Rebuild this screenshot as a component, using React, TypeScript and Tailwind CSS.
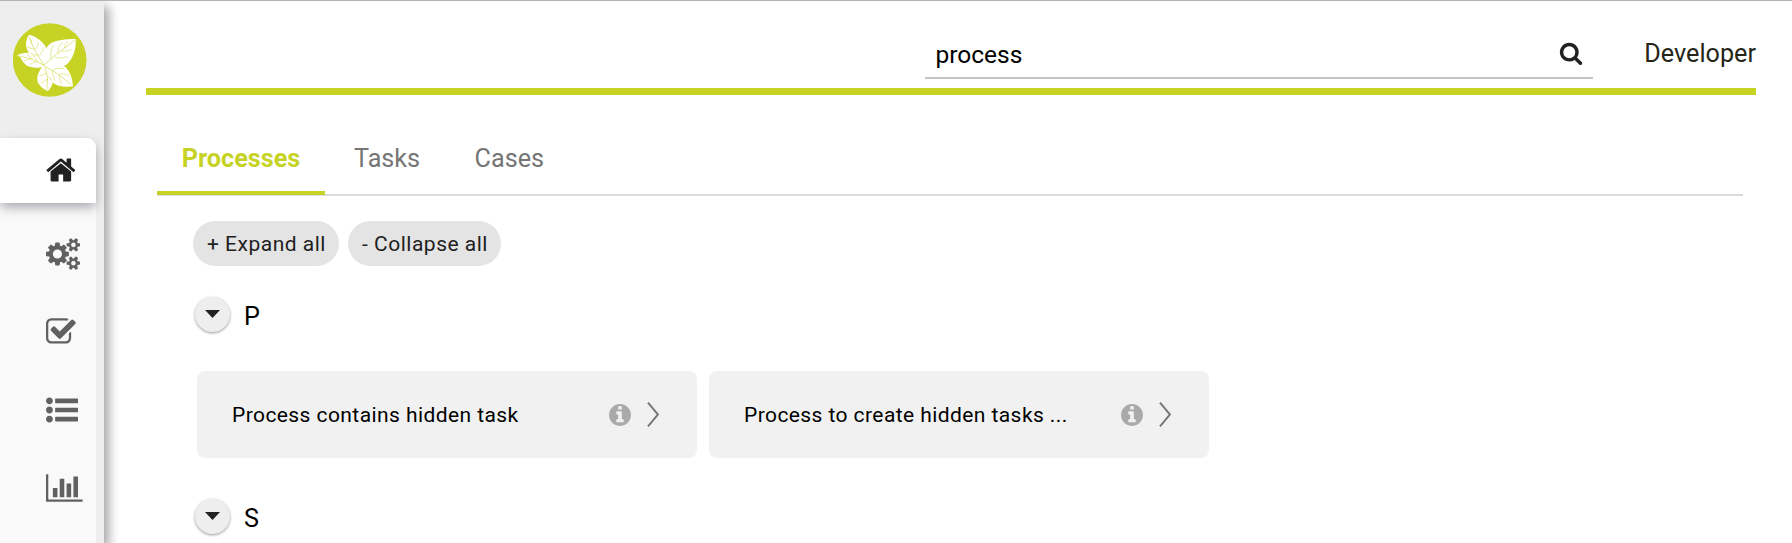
import React from "react";

const HOME =
  "M1472 992v480q0 26-19 45t-45 19h-384v-384h-256v384h-384q-26 0-45-19t-19-45v-480q0-1 .5-3t.5-3l575-474 575 474q1 2 1 6zm223-69l-62 74q-8 9-21 11h-3q-13 0-21-7l-692-577-692 577q-12 8-24 7-13-2-21-11l-62-74q-8-10-7-23.5t11-21.5l719-599q32-26 76-26t76 26l244 204v-195q0-14 9-23t23-9h192q14 0 23 9t9 23v408l219 182q10 8 11 21.5t-7 23.5z";
const COGS =
  "M832 896q0-106-75-181t-181-75-181 75-75 181 75 181 181 75 181-75 75-181zm768 512q0-52-38-90t-90-38-90 38-38 90q0 53 37.5 90.5t90.5 37.5 90.5-37.5 37.5-90.5zm0-1024q0-52-38-90t-90-38-90 38-38 90q0 53 37.5 90.5t90.5 37.5 90.5-37.5 37.5-90.5zm-384 421v185q0 10-7 19.5t-16 10.5l-155 24q-11 35-32 76 34 48 90 115 7 11 7 20 0 12-7 19-23 30-82.5 89.5t-78.5 59.5q-11 0-21-7l-115-90q-37 19-77 31-11 108-23 155-7 24-30 24h-186q-11 0-20-7.5t-10-17.5l-23-153q-34-10-75-31l-118 89q-7 7-20 7-11 0-21-8-144-133-144-160 0-9 7-19 10-14 41-53t47-61q-23-44-35-82l-152-24q-10-1-17-9.5t-7-19.5v-185q0-10 7-19.5t16-10.5l155-24q11-35 32-76-34-48-90-115-7-11-7-20 0-12 7-20 22-30 82-89t79-59q11 0 21 7l115 90q34-18 77-32 11-108 23-154 7-24 30-24h186q11 0 20 7.5t10 17.5l23 153q34 10 75 31l118-89q8-7 20-7 11 0 21 8 144 133 144 160 0 8-7 19-12 16-42 54t-45 60q23 48 34 82l152 23q10 2 17 10.5t7 19.5zm640 533v140q0 16-149 31-12 27-30 52 51 113 51 138 0 4-4 7-122 71-124 71-8 0-46-47t-52-68q-20 2-30 2t-30-2q-14 21-52 68t-46 47q-2 0-124-71-4-3-4-7 0-25 51-138-18-25-30-52-149-15-149-31v-140q0-16 149-31 13-29 30-52-51-113-51-138 0-4 4-7 4-2 35-20t59-34 30-16q8 0 46 46.5t52 67.5q20-2 30-2t30 2q51-71 92-112l6-2q4 0 124 70 4 3 4 7 0 25-51 138 17 23 30 52 149 15 149 31zm0-1024v140q0 16-149 31-12 27-30 52 51 113 51 138 0 4-4 7-122 71-124 71-8 0-46-47t-52-68q-20 2-30 2t-30-2q-14 21-52 68t-46 47q-2 0-124-71-4-3-4-7 0-25 51-138-18-25-30-52-149-15-149-31v-140q0-16 149-31 13-29 30-52-51-113-51-138 0-4 4-7 4-2 35-20t59-34 30-16q8 0 46 46.5t52 67.5q20-2 30-2t30 2q51-71 92-112l6-2q4 0 124 70 4 3 4 7 0 25-51 138 17 23 30 52 149 15 149 31z";
const CHECK =
  "M1472 930v318q0 119-84.5 203.5t-203.5 84.5h-832q-119 0-203.5-84.5t-84.5-203.5v-832q0-119 84.5-203.5t203.5-84.5h832q63 0 117 25 15 7 18 23 3 17-9 29l-49 49q-10 10-23 10-3 0-9-2-23-6-45-6h-832q-66 0-113 47t-47 113v832q0 66 47 113t113 47h832q66 0 113-47t47-113v-254q0-13 9-22l64-64q10-10 23-10 6 0 12 3 20 8 20 29zm231-489l-814 814q-24 24-57 24t-57-24l-430-430q-24-24-24-57t24-57l110-110q24-24 57-24t57 24l263 263 647-647q24-24 57-24t57 24l110 110q24 24 24 57t-24 57z";
const LIST =
  "M384 1408q0 80-56 136t-136 56-136-56-56-136 56-136 136-56 136 56 56 136zm0-512q0 80-56 136t-136 56-136-56-56-136 56-136 136-56 136 56 56 136zm1408 416v192q0 13-9.500 22.500t-22.500 9.500h-1216q-13 0-22.500-9.500t-9.500-22.500v-192q0-13 9.500-22.500t22.500-9.500h1216q13 0 22.500 9.500t9.500 22.500zm-1408-928q0 80-56 136t-136 56-136-56-56-136 56-136 136-56 136 56 56 136zm1408 416v192q0 13-9.500 22.500t-22.500 9.500h-1216q-13 0-22.500-9.500t-9.500-22.500v-192q0-13 9.500-22.500t22.500-9.500h1216q13 0 22.500 9.500t9.500 22.500zm0-512v192q0 13-9.500 22.500t-22.500 9.500h-1216q-13 0-22.500-9.500t-9.500-22.500v-192q0-13 9.500-22.500t22.500-9.500h1216q13 0 22.500 9.500t9.500 22.500z";
const CHART =
  "M640 896v512h-256v-512h256zm384-512v1024h-256v-1024h256zm1024 1152v128h-2048v-1536h128v1408h1920zm-640-896v768h-256v-768h256zm384-384v1152h-256v-1152h256z";
const SEARCH =
  "M1216 832q0-185-131.500-316.500t-316.500-131.500-316.500 131.500-131.500 316.500 131.500 316.500 316.500 131.500 316.500-131.500 131.500-316.500zm512 832q0 52-38 90t-90 38q-54 0-90-38l-343-342q-179 124-399 124-143 0-273.500-55.500t-225-150-150-225-55.500-273.500 55.500-273.500 150-225 225-150 273.500-55.500 273.500 55.500 225 150 150 225 55.500 273.500q0 220-124 399l343 343q37 37 37 90z";
const INFO =
  "M1152 1376v-160q0-14-9-23t-23-9h-96v-512q0-14-9-23t-23-9h-320q-14 0-23 9t-9 23v160q0 14 9 23t23 9h96v320h-96q-14 0-23 9t-9 23v160q0 14 9 23t23 9h448q14 0 23-9t9-23zm-128-896v-160q0-14-9-23t-23-9h-192q-14 0-23 9t-9 23v160q0 14 9 23t23 9h192q14 0 23-9t9-23zm640 416q0 209-103 385.500t-279.500 279.500-385.500 103-385.500-103-279.500-279.500-103-385.500 103-385.500 279.500-279.500 385.500-103 385.500 103 279.500 279.500 103 385.500z";

function Logo() {
  return (
    <svg viewBox="8 9 222 222" className="h-[74px] w-[74px]">
      <circle cx="118" cy="120" r="110.500" fill="#c6d324" />
      <g fill="#fff">
        <path d="M104 136C72 118 44 96 47 68Q48 54 56 45C66 46 78 52 88 60C98 68 104 76 107 82Q116 108 104 136Z" />
        <path d="M100 136C100 100 106 78 124 68Q152 56 196 57C198 84 190 116 166 136Q134 150 100 136Z" />
        <path d="M101 137C92 146 62 145 47 135Q36 126 30 112L20 106C32 98 60 96 74 102Q94 112 101 137Z" />
        <path d="M98 136C84 156 76 174 84 190Q94 206 112 213C122 206 128 192 128 178Q122 150 98 136Z" />
        <path d="M100 136C128 130 154 132 166 142Q186 162 188 199C168 202 142 200 130 190Q106 164 100 136Z" />
      </g>
      <g fill="none" stroke="#c6d324" strokeWidth="2.200" opacity="0.75">
        <path d="M102 136Q70 92 57 51M98 138Q130 108 193 61M100 135Q62 112 24 107M104 138Q116 172 110 208M106 140Q146 160 182 194" />
        <path d="M64 72Q62 66 64 58M74 88Q60 86 50 80M86 106Q72 106 60 100M76 88Q84 76 84 66M88 106Q98 94 100 82" strokeWidth="1.800" />
        <path d="M122 118Q118 90 130 76M142 100Q142 80 156 66M162 84Q164 72 172 64M134 112Q154 118 172 110M154 94Q170 96 184 88" strokeWidth="1.800" />
        <path d="M82 124Q68 126 58 134M66 116Q52 116 40 124M80 122Q74 110 66 104M62 114Q56 106 48 102" strokeWidth="1.800" />
        <path d="M110 158Q98 166 86 168M113 176Q102 184 92 190M112 168Q122 174 124 182" strokeWidth="1.800" />
        <path d="M126 150Q126 168 134 182M146 163Q146 178 154 192M128 148Q146 144 160 146M148 162Q164 160 176 166" strokeWidth="1.800" />
      </g>
    </svg>
  );
}

const menu = [
  { name: "Processes", path: COGS, box: "-64 0 1920 1792", cls: "w-[34.3px]" },
  { name: "Tasks", path: CHECK, box: "64 0 1792 1792", cls: "w-8" },
  { name: "Cases", path: LIST, box: "0 0 1792 1792", cls: "w-8" },
  { name: "Statistics", path: CHART, box: "0 0 2048 1792", cls: "w-[36.6px]" },
];

function Sidebar() {
  return (
    <aside className="z-10 flex w-[104px] shrink-0 flex-col bg-[#eee] shadow-[5px_5px_10px_rgba(0,0,0,0.35)]">
      <div className="h-[137px] pt-[22px] pl-[12.500px]">
        <Logo />
      </div>
      <nav className="flex w-24 grow flex-col bg-[#f9f9f9]">
        <div className="bg-[#eee]">
          <a className="flex h-[65px] items-center rounded-tr-[9px] bg-white pb-px pl-[46px] shadow-[0_5px_12px_-1px_rgba(0,0,30,0.35)]">
            <svg viewBox="64 0 1792 1792" className="h-8 w-8 fill-[#212121]">
              <path d={HOME} />
            </svg>
          </a>
        </div>
        <div className="flex flex-col pt-[11.800px]">
          {menu.map((m) => (
            <a key={m.name} className="flex h-[78px] items-center pl-[46.200px]">
              <svg viewBox={m.box} className={"h-8 fill-[#616161] " + m.cls}>
                <path d={m.path} />
              </svg>
            </a>
          ))}
        </div>
      </nav>
    </aside>
  );
}

function Header() {
  return (
    <header className="flex h-[94px] items-start justify-end border-b-[7px] border-[#c6d324]">
      <div className="mt-[30px] flex h-12 w-[668px] items-center justify-between border-b-2 border-[#c4c4c4] pr-2 pl-[10.500px]">
        <span className="pt-0.5 text-[24.500px] text-black">process</span>
        <svg viewBox="0 0 1792 1792" className="mr-0.5 mb-0.5 h-6 w-6 fill-[#212121]">
          <path d={SEARCH} />
        </svg>
      </div>
      <span className="mt-[34px] ml-[51px] w-[112px] text-right text-[25.200px] text-[#262618]">Developer</span>
    </header>
  );
}

function GroupHeader({ letter }: { letter: string }) {
  return (
    <div className="flex h-9 items-center">
      <div className="flex h-[35px] w-[35px] items-center justify-center rounded-full bg-[#eee] shadow-[0_1px_3px_rgba(0,0,0,0.4)]">
        <svg viewBox="0 0 15 8" className="mb-px h-2 w-[15px] fill-[#212121]">
          <path d="M0 0H15L7.500 8Z" />
        </svg>
      </div>
      <span className="ml-3.5 pt-[6px] text-[25.200px] text-black">{letter}</span>
    </div>
  );
}

function Card({ title }: { title: string }) {
  return (
    <div className="flex h-[87px] w-[500px] items-center rounded-lg bg-[#f1f1f1] pl-[35px]">
      <span className="w-[377px] pt-0.5 text-[21px] tracking-[0.42px] text-black">{title}</span>
      <svg viewBox="128 128 1536 1536" className="h-[22px] w-[22px] fill-[#aaa]">
        <path d={INFO} />
      </svg>
      <svg viewBox="0 0 12 25" className="ml-4 h-[25px] w-3" fill="none" stroke="#777" strokeWidth="2">
        <path d="M1 .7L11 12.500L1 24.300" />
      </svg>
    </div>
  );
}

export default function App() {
  return (
    <div className="flex h-[543px] w-full overflow-hidden border-t border-[#b4b4b4] bg-white font-['Roboto',sans-serif]">
      <Sidebar />
      <main className="flex grow flex-col pr-9 pl-[42px]">
        <Header />
        <div className="ml-[11px] mr-[13px] flex h-[101px] items-end border-b-2 border-[#dcdcdc] text-[25.200px] text-[#757575]">
          <div className="-mb-px flex h-[55px] w-[168px] justify-center border-b-4 border-[#c6d324] font-bold text-[#c6d324]">
            Processes
          </div>
          <div className="ml-[29px] h-[54px]">Tasks</div>
          <div className="ml-[54.500px] h-[54px]">Cases</div>
        </div>
        <div className="flex flex-col pl-[47px]">
          <div className="mt-[25px] flex gap-[9px] text-[21px] tracking-[0.5px] text-[#212121]">
            <div className="flex h-[45px] w-[146px] items-center justify-center rounded-full bg-[#e4e4e4] pt-0.5 pl-px">+ Expand all</div>
            <div className="flex h-[45px] w-[153px] items-center justify-center rounded-full bg-[#e4e4e4] pt-0.5 pl-px">- Collapse all</div>
          </div>
          <div className="mt-[30px] pl-0.5">
            <GroupHeader letter="P" />
          </div>
          <div className="mt-[39px] flex gap-3 pl-1">
            <Card title="Process contains hidden task" />
            <Card title="Process to create hidden tasks ..." />
          </div>
          <div className="mt-10 pl-0.5">
            <GroupHeader letter="S" />
          </div>
        </div>
      </main>
    </div>
  );
}
